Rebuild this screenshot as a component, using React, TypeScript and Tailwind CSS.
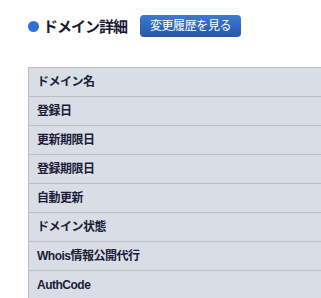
const rows = [
  'ドメイン名',
  '登録日',
  '更新期限日',
  '登録期限日',
  '自動更新',
  'ドメイン状態',
  'Whois情報公開代行',
  'AuthCode',
];

const App = (): JSX.Element => {
  return (
    <div
      className="w-[321px] h-[298px] overflow-hidden bg-white pl-[28px] pt-[15px]"
      style={{ fontFamily: '"Liberation Sans", "Noto Sans CJK JP", sans-serif' }}
    >
      <div className="flex items-center h-[22px]">
        <span className="block w-[11px] h-[11px] rounded-full bg-[#2f6fd6]"></span>
        <h2 className="ml-[4px] text-[15px] font-bold text-[#1a1a33] leading-none tracking-[-1px]">
          ドメイン詳細
        </h2>
        <button className="ml-[13px] w-[101px] h-[22px] rounded-[4px] bg-gradient-to-b from-[#3b7bd6] to-[#2657a8] text-white text-[12px] leading-none tracking-[-0.4px]">
          変更履歴を見る
        </button>
      </div>
      <table className="mt-[30px] w-[400px] border-collapse border-t border-l border-[#babec3]">
        <tbody>
          {rows.map((label) => (
            <tr key={label} className="h-[29px] border-b border-[#babec3] bg-[#d9dee6]">
              <th className="pl-[8px] text-left text-[12px] font-bold text-[#1c1c38] tracking-[-0.5px]">
                {label}
              </th>
            </tr>
          ))}
        </tbody>
      </table>
    </div>
  );
};

export default App;
